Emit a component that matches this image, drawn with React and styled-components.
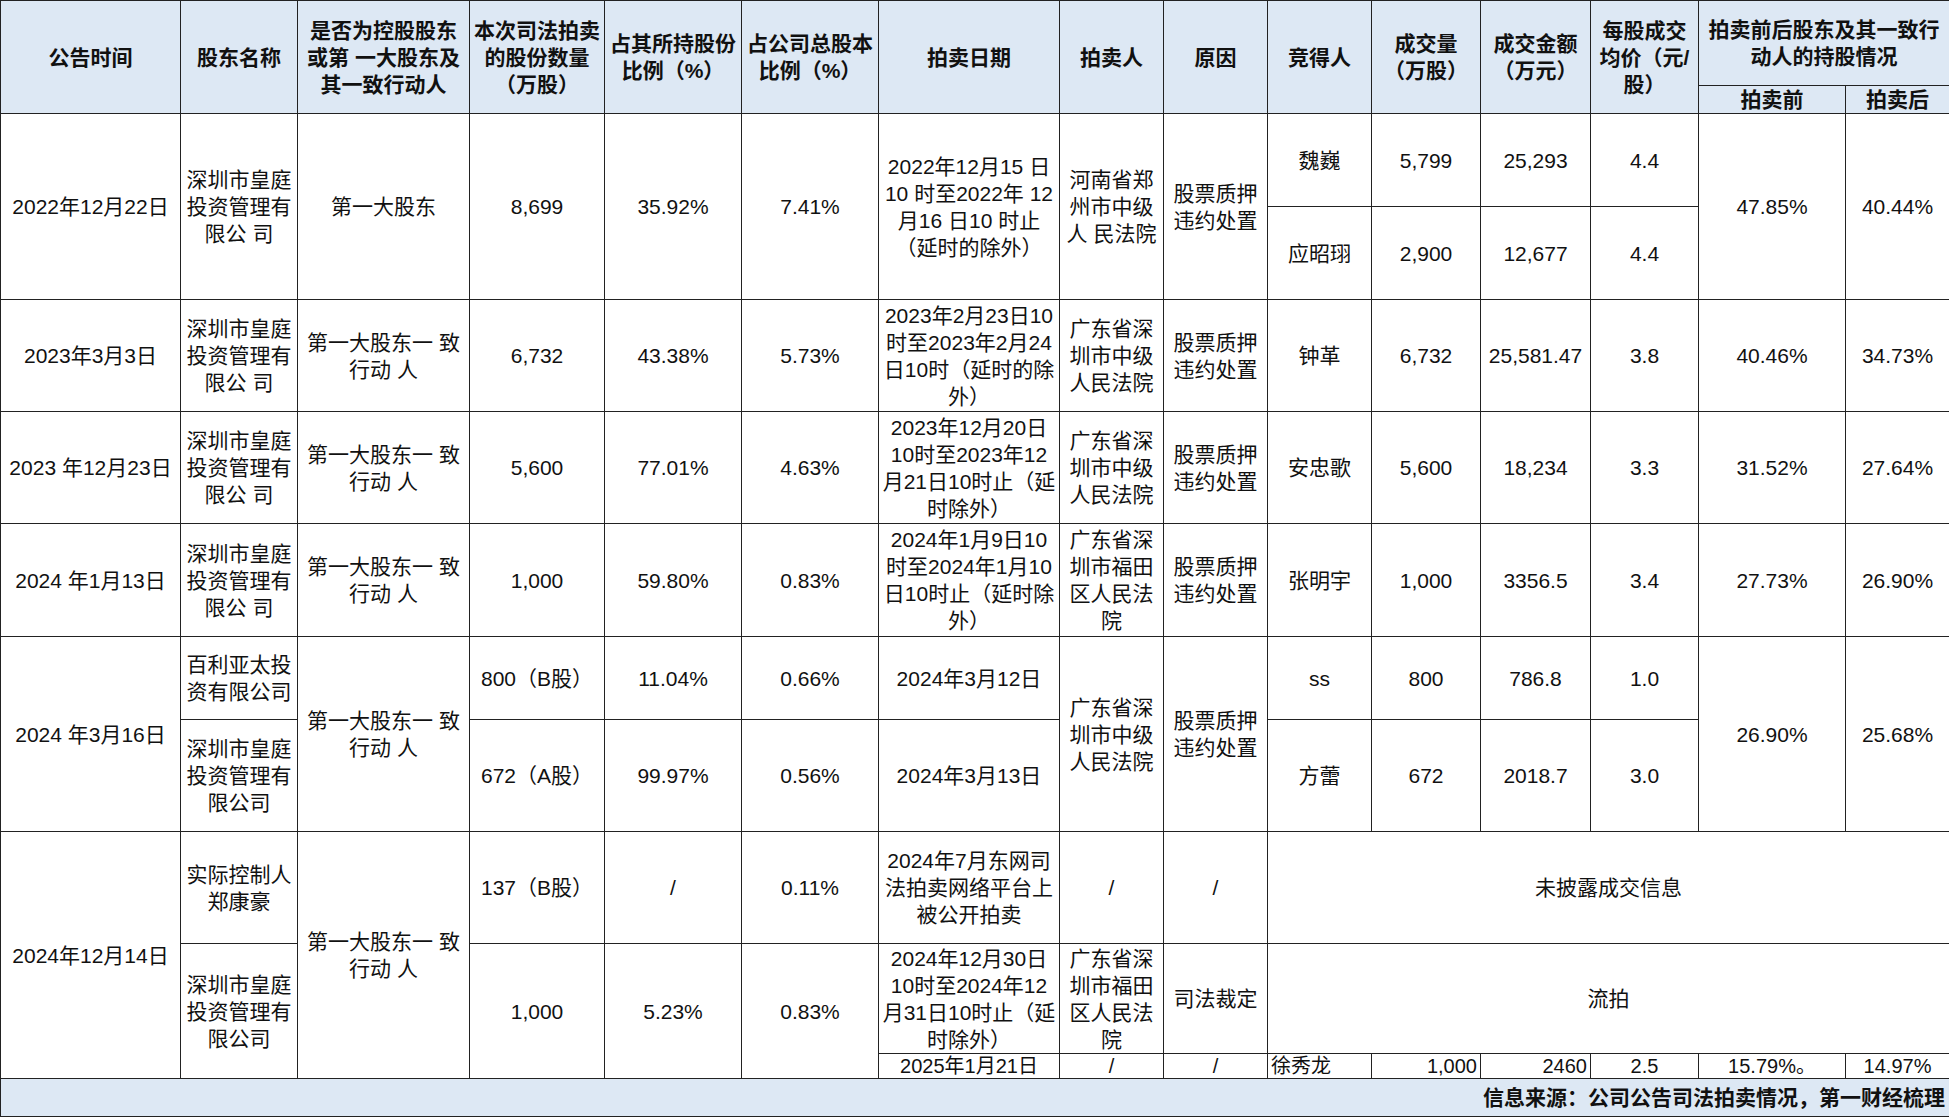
import React from "react";
import styled, { createGlobalStyle } from "styled-components";

const Global = createGlobalStyle`
  html, body { margin: 0; padding: 0; background: #fff; }
  body { font-family: "Liberation Sans", "Noto Sans CJK SC", sans-serif; }
`;

const Table = styled.table`
  width: 1949px;
  table-layout: fixed;
  border-collapse: collapse;
  font-size: 21px;
  line-height: 27px;
  color: #111;
`;

const Th = styled.th`
  background: #dde8f4;
  border: 1.5px solid #222;
  font-weight: bold;
  padding: 0 3px;
  text-align: center;
  vertical-align: middle;
`;

const Td = styled.td`
  border: 1.5px solid #222;
  padding: 0 3px;
  text-align: ${(p) => p.$align || "center"};
  vertical-align: middle;
  font-size: ${(p) => (p.$small ? "20px" : "21px")};
  line-height: ${(p) => (p.$small ? "22px" : "27px")};
`;

const Row = styled.tr`
  height: ${(p) => p.$h}px;
`;

const Footer = styled.td`
  background: #dde8f4;
  border: 1.5px solid #222;
  text-align: right;
  font-weight: bold;
  padding: 0 4px;
  height: 37px;
`;

const widths = [180, 117, 172, 135, 137, 137, 181, 104, 104, 104, 109, 110, 108, 147, 104];

const Cells = ({ items }) =>
  items.map((c, i) =>
    typeof c === "string" ? (
      <Td key={i}>{c}</Td>
    ) : (
      <Td key={i} rowSpan={c.r} colSpan={c.c} $align={c.a} $small={c.s}>
        {c.t}
      </Td>
    )
  );

const court = "股票质押违约处置";
const grp = "第一大股东一 致行动 人";
const hting = "深圳市皇庭投资管理有限公 司";

export default function App() {
  return (
    <>
      <Global />
      <Table>
        <colgroup>
          {widths.map((w, i) => (
            <col key={i} style={{ width: w }} />
          ))}
        </colgroup>
        <tbody>
          <Row $h={85}>
            <Th rowSpan={2}>公告时间</Th>
            <Th rowSpan={2}>股东名称</Th>
            <Th rowSpan={2}>是否为控股股东或第 一大股东及其一致行动人</Th>
            <Th rowSpan={2}>本次司法拍卖的股份数量 （万股）</Th>
            <Th rowSpan={2}>占其所持股份比例（%）</Th>
            <Th rowSpan={2}>占公司总股本比例（%）</Th>
            <Th rowSpan={2}>拍卖日期</Th>
            <Th rowSpan={2}>拍卖人</Th>
            <Th rowSpan={2}>原因</Th>
            <Th rowSpan={2}>竞得人</Th>
            <Th rowSpan={2}>成交量（万股）</Th>
            <Th rowSpan={2}>成交金额（万元）</Th>
            <Th rowSpan={2}>每股成交均价（元/股）</Th>
            <Th colSpan={2}>拍卖前后股东及其一致行动人的持股情况</Th>
          </Row>
          <Row $h={27}>
            <Th>拍卖前</Th>
            <Th>拍卖后</Th>
          </Row>
          <Row $h={93}>
            <Cells
              items={[
                { t: "2022年12月22日", r: 2 },
                { t: hting, r: 2 },
                { t: "第一大股东", r: 2 },
                { t: "8,699", r: 2 },
                { t: "35.92%", r: 2 },
                { t: "7.41%", r: 2 },
                { t: "2022年12月15 日10 时至2022年 12 月16 日10 时止（延时的除外）", r: 2 },
                { t: "河南省郑州市中级人 民法院", r: 2 },
                { t: court, r: 2 },
                "魏巍", "5,799", "25,293", "4.4",
                { t: "47.85%", r: 2 },
                { t: "40.44%", r: 2 },
              ]}
            />
          </Row>
          <Row $h={93}>
            <Cells items={["应昭珝", "2,900", "12,677", "4.4"]} />
          </Row>
          <Row $h={112}>
            <Cells
              items={[
                "2023年3月3日", hting, grp, "6,732", "43.38%", "5.73%",
                "2023年2月23日10时至2023年2月24日10时（延时的除外）",
                "广东省深圳市中级人民法院", court, "钟革", "6,732", "25,581.47", "3.8", "40.46%", "34.73%",
              ]}
            />
          </Row>
          <Row $h={112}>
            <Cells
              items={[
                "2023 年12月23日", hting, grp, "5,600", "77.01%", "4.63%",
                "2023年12月20日10时至2023年12月21日10时止（延时除外）",
                "广东省深圳市中级人民法院", court, "安忠歌", "5,600", "18,234", "3.3", "31.52%", "27.64%",
              ]}
            />
          </Row>
          <Row $h={113}>
            <Cells
              items={[
                "2024 年1月13日", hting, grp, "1,000", "59.80%", "0.83%",
                "2024年1月9日10时至2024年1月10日10时止（延时除外）",
                "广东省深圳市福田区人民法院", court, "张明宇", "1,000", "3356.5", "3.4", "27.73%", "26.90%",
              ]}
            />
          </Row>
          <Row $h={83}>
            <Cells
              items={[
                { t: "2024 年3月16日", r: 2 },
                "百利亚太投资有限公司",
                { t: grp, r: 2 },
                "800（B股）", "11.04%", "0.66%", "2024年3月12日",
                { t: "广东省深圳市中级人民法院", r: 2 },
                { t: court, r: 2 },
                "ss", "800", "786.8", "1.0",
                { t: "26.90%", r: 2 },
                { t: "25.68%", r: 2 },
              ]}
            />
          </Row>
          <Row $h={112}>
            <Cells
              items={["深圳市皇庭投资管理有限公司", "672（A股）", "99.97%", "0.56%", "2024年3月13日", "方蕾", "672", "2018.7", "3.0"]}
            />
          </Row>
          <Row $h={112}>
            <Cells
              items={[
                { t: "2024年12月14日", r: 3 },
                "实际控制人郑康豪",
                { t: grp, r: 3 },
                "137（B股）", "/", "0.11%",
                "2024年7月东网司法拍卖网络平台上被公开拍卖",
                "/", "/",
                { t: "未披露成交信息", c: 6 },
              ]}
            />
          </Row>
          <Row $h={110}>
            <Cells
              items={[
                { t: "深圳市皇庭投资管理有限公司", r: 2 },
                { t: "1,000", r: 2 },
                { t: "5.23%", r: 2 },
                { t: "0.83%", r: 2 },
                "2024年12月30日10时至2024年12月31日10时止（延时除外）",
                "广东省深圳市福田区人民法院", "司法裁定",
                { t: "流拍", c: 6 },
              ]}
            />
          </Row>
          <Row $h={25}>
            <Cells
              items={[
                { t: "2025年1月21日", s: 1 },
                { t: "/", s: 1 },
                { t: "/", s: 1 },
                { t: "徐秀龙", s: 1, a: "left" },
                { t: "1,000", s: 1, a: "right" },
                { t: "2460", s: 1, a: "right" },
                { t: "2.5", s: 1 },
                { t: "15.79%。", s: 1 },
                { t: "14.97%", s: 1 },
              ]}
            />
          </Row>
          <tr>
            <Footer colSpan={15}>信息来源：公司公告司法拍卖情况，第一财经梳理</Footer>
          </tr>
        </tbody>
      </Table>
    </>
  );
}
